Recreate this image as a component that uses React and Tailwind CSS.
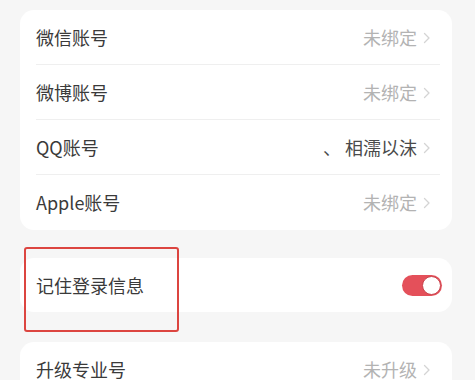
import React from 'react';

const font = { fontFamily: '"Noto Sans CJK SC", "Noto Sans", sans-serif' };

const Chevron = () => (
  <svg width="8" height="12" viewBox="0 0 8 12" className="ml-1.5 shrink-0">
    <path d="M1.5 1.5 L6 6 L1.5 10.5" fill="none" stroke="#d4d4d4" strokeWidth="1.3" strokeLinecap="round" strokeLinejoin="round" />
  </svg>
);

const Row = ({ label, value, dark, divider }) => (
  <div className="flex h-[55px] items-center pl-4 pr-[21px] relative">
    <span className="text-[18px] text-[#3a3a3a] flex-1">{label}</span>
    <span className={`text-[18px] ${dark ? 'text-[#4a4a4a]' : 'text-[#b3b3b3]'}`}>{value}</span>
    <Chevron />
    {divider && <div className="absolute bottom-0 left-4 right-3 h-px bg-[#efefef]" />}
  </div>
);

export default function App() {
  const accounts = [
    { label: '微信账号', value: '未绑定' },
    { label: '微博账号', value: '未绑定' },
    { label: 'QQ账号', value: '、 相濡以沫', dark: true },
    { label: 'Apple账号', value: '未绑定' },
  ];

  return (
    <div className="w-[475px] h-[380px] bg-[#f6f6f6] overflow-hidden relative" style={font}>
      <div className="pt-[10px] pl-5 pr-[23px] flex flex-col">
        <div className="bg-white rounded-[14px]">
          {accounts.map((a, i) => (
            <Row key={a.label} {...a} divider={i < accounts.length - 1} />
          ))}
        </div>

        <div className="bg-white rounded-[14px] mt-[28px] h-[54px] flex items-center pl-4 pr-[10px]">
          <span className="text-[18px] text-[#3a3a3a] flex-1">记住登录信息</span>
          <div className="w-[40px] h-[21px] rounded-full bg-[#e4505a] flex items-center justify-end pr-[1px]">
            <div className="w-[19px] h-[19px] rounded-full bg-white border border-[#c9444d]" />
          </div>
        </div>

        <div className="bg-white rounded-[14px] mt-[30px]">
          <Row label="升级专业号" value="未升级" />
        </div>
      </div>

      {/* highlight box */}
      <div className="absolute left-[24px] top-[247px] w-[155px] h-[85px] border-2 border-[#dc4540] rounded-[3px]" />
    </div>
  );
}
